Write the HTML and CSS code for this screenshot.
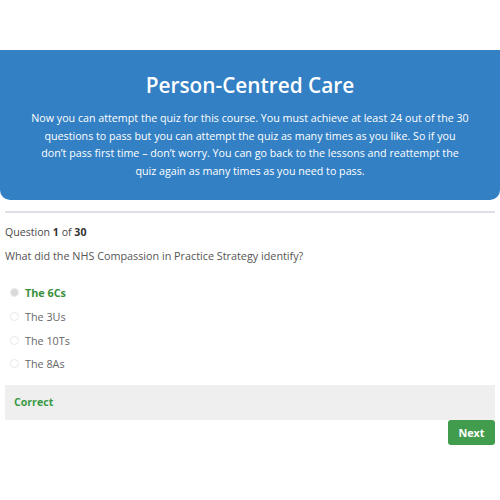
FILE: index.html
```html
<!DOCTYPE html>
<html lang="en">

<head>
    <meta charset="UTF-8">
    <meta name="viewport" content="width=device-width, initial-scale=1.0">
    <title>Person-Centred Care Quiz</title>
    <link rel="stylesheet" href="styles.css">
</head>

<body>
    <div class="intro">
        <h1>Person-Centred Care</h1>
        <p>Now you can attempt the quiz for this course. You must achieve at least 24 out of the 30<br>
            questions to pass but you can attempt the quiz as many times as you like. So if you<br>
            don’t pass first time – don’t worry. You can go back to the lessons and reattempt the<br>
            quiz again as many times as you need to pass.</p>
    </div>

    <div class="quiz">
        <hr class="divider">
        <div class="counter">Question <b>1</b> of <b>30</b></div>
        <div class="question">What did the NHS Compassion in Practice Strategy identify?</div>

        <ul class="answers">
            <li class="answer correct"><span class="radio checked"></span>The 6Cs</li>
            <li class="answer"><span class="radio"></span>The 3Us</li>
            <li class="answer"><span class="radio"></span>The 10Ts</li>
            <li class="answer"><span class="radio"></span>The 8As</li>
        </ul>

        <div class="feedback">Correct</div>
        <div class="actions">
            <button class="next">Next</button>
        </div>
    </div>
</body>

</html>
```

FILE: styles.css
```css
body {
    margin: 0;
    font-family: 'Open Sans', 'Noto Sans', sans-serif;
    background-color: #fff;
    color: #555;
}

.intro {
    margin-top: 50px;
    background-color: #3380c4;
    color: #fff;
    text-align: center;
    padding: 20px 20px 19px;
    border-radius: 0 0 10px 10px;
}

.intro h1 {
    margin: 0 0 10px;
    font-size: 20.8px;
    font-weight: 600;
    line-height: 30px;
}

.intro p {
    margin: 0;
    font-size: 10.7px;
    line-height: 17.7px;
}

.quiz {
    padding: 0 5px;
}

.divider {
    margin: 11px 0 0;
    border: 0;
    border-top: 2px solid #dcdfe3;
}

.counter {
    margin-top: 10px;
    font-size: 10.6px;
    line-height: 18px;
    color: #4a4a4a;
}

.counter b {
    color: #333;
}

.question {
    margin-top: 6px;
    font-size: 10.8px;
    line-height: 18px;
}

.answers {
    list-style: none;
    margin: 16px 0 0;
    padding: 0;
}

.answer {
    display: flex;
    align-items: center;
    height: 23.7px;
    font-size: 10.8px;
    color: #666;
}

.answer.correct {
    color: #3a8f3e;
    font-weight: 700;
}

.radio {
    width: 7px;
    height: 7px;
    margin: 0 6px 0 5px;
    border: 1px solid #e8e8e8;
    border-radius: 50%;
    background-color: #fff;
}

.radio.checked {
    background-color: #d9d9d9;
    border-color: #ebebeb;
}

.feedback {
    margin-top: 9px;
    padding: 0 9px;
    height: 35px;
    display: flex;
    align-items: center;
    background-color: #efefef;
    color: #3a9a45;
    font-size: 10.6px;
    font-weight: 700;
}

.actions {
    display: flex;
    justify-content: flex-end;
}

.next {
    font-family: 'Open Sans', 'Noto Sans', sans-serif;
    font-size: 10.8px;
    font-weight: 700;
    color: #fff;
    background-color: #419c4d;
    border: 0;
    border-radius: 3px;
    width: 47px;
    height: 25px;
    padding: 0;
    cursor: pointer;
}
```
